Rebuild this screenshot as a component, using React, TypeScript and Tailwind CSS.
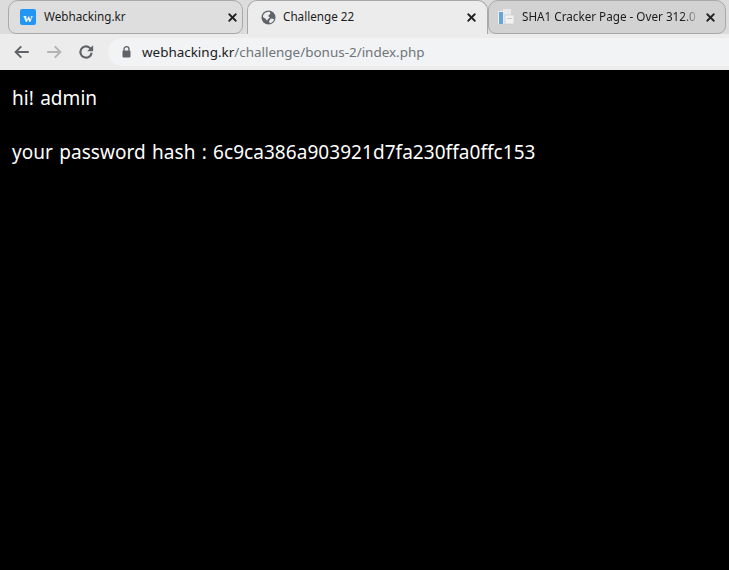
import { X } from 'lucide-react'

type TabProps = { title: string; active?: boolean; icon: React.ReactNode; className: string; gap: string; fade?: boolean }

function Tab({ title, active, icon, className, gap, fade }: TabProps) {
  return (
    <div className={`${className} h-[34px] flex items-center rounded-t-[10px] border border-[#a9a9a9] ${active ? 'bg-[#ececec] border-b-0 pb-[1px]' : 'rounded-b-[8px]'}`}>
      <div className="w-[16px] h-[16px] flex items-center justify-center shrink-0">{icon}</div>
      <span className={`${gap} flex-1 overflow-hidden whitespace-nowrap text-[11.7px] text-[#1c1c1c] ${fade ? '[mask-image:linear-gradient(to_right,black_90%,transparent)]' : ''}`}>{title}</span>
      <X size={13} strokeWidth={3.4} className="shrink-0 ml-[4px] text-[#222]" />
    </div>
  )
}

function GlobeIcon() {
  return (
    <svg width="15" height="15" viewBox="0 0 16 16">
      <circle cx="8" cy="8" r="7.5" fill="#5f6368" />
      <path d="M2.5 5 C4 2.5 7 1.5 9.5 2 L10 4 L7.5 6.5 L9.5 8 L7 10 L6.5 11.5 L4.5 9 L2 7.5 Z M10.5 9 L14 9.5 C13.5 11.5 12 13.5 9.5 14.2 L8.5 12 Z" fill="#ececec" />
    </svg>
  )
}

function DocIcon() {
  return (
    <svg width="16" height="16" viewBox="0 0 16 16">
      <rect x="0" y="2" width="7" height="13" fill="#eef1f4" />
      <rect x="1" y="3" width="4" height="12" fill="#64a6dc" />
      <rect x="5" y="0" width="8" height="15" fill="#e9e9e9" />
      <rect x="7" y="6" width="9" height="9" fill="#f2f2f2" stroke="#c4c4c4" strokeWidth="0.6" />
      <rect x="9" y="9" width="5" height="1" fill="#c9c9c9" />
    </svg>
  )
}

export default function App() {
  return (
    <div className="w-[729px] h-[570px] bg-black flex flex-col overflow-hidden" style={{ fontFamily: '"Noto Sans", "Noto Sans CJK KR", sans-serif' }}>
      <div className="h-[34px] bg-[#dcdcdc] flex items-start shrink-0">
        <Tab
          className="w-[235px] ml-[8px] pl-[11px] pr-[3px] bg-[#dedede]"
          gap="ml-[8px]"
          title="Webhacking.kr"
          icon={
            <div className="w-[16px] h-[16px] bg-[#2196f3] rounded-[2px] flex items-center justify-center text-white text-[13px] font-bold leading-none" style={{ fontFamily: '"Liberation Serif", serif' }}>
              w
            </div>
          }
        />
        <Tab className="w-[241px] ml-[4px] pl-[12px] pr-[9px]" gap="ml-[7px]" title="Challenge 22" active icon={<GlobeIcon />} />
        <Tab className="w-[238px] pl-[9px] pr-[8px] bg-[#d2d2d2]" gap="ml-[8px]" title="SHA1 Cracker Page - Over 312.0" fade icon={<DocIcon />} />
      </div>
      <div className="h-[36px] bg-[#ececec] flex items-center shrink-0">
        <div className="w-[108px] flex items-center shrink-0 pl-[13px] gap-[14px]">
          <svg width="18" height="18" viewBox="0 0 24 24" fill="none" stroke="#5f6368" strokeWidth="2.6"><path d="M21 12H4M11 4.5 3.5 12l7.5 7.5" /></svg>
          <svg width="18" height="18" viewBox="0 0 24 24" fill="none" stroke="#b3b3b3" strokeWidth="2.6"><path d="M3 12h17M13 4.5l7.5 7.5-7.5 7.5" /></svg>
          <svg width="18" height="18" viewBox="0 0 24 24" fill="none" stroke="#5f6368" strokeWidth="2.8"><path d="M19.5 13a7.5 7.5 0 1 1-2.6-6.7L19 8.5" /><path d="M21.5 3v8h-8z" fill="#5f6368" stroke="none" /></svg>
        </div>
        <div className="flex-1 h-[28px] bg-[#f1f3f4] rounded-l-[14px] flex items-center pl-[14px] text-[13.45px]">
          <svg width="9" height="12" viewBox="0 0 9 12" className="shrink-0">
            <path d="M2 5V3.2a2.5 2.5 0 0 1 5 0V5" fill="none" stroke="#5f6368" strokeWidth="1.3" />
            <rect x="0.5" y="4.5" width="8" height="7" rx="1" fill="#5f6368" />
          </svg>
          <span className="ml-[11px] text-[#202124]">webhacking.kr</span>
          <span className="text-[#70757a]">/challenge/bonus-2/index.php</span>
        </div>
      </div>
      <div className="flex-1 pt-[15px] pl-[12px] text-white text-[19px] tracking-[0.05px] [word-spacing:1.25px] leading-[27px]">
        <p>hi! admin</p>
        <p className="mt-[27px]">your password hash : 6c9ca386a903921d7fa230ffa0ffc153</p>
      </div>
    </div>
  )
}
